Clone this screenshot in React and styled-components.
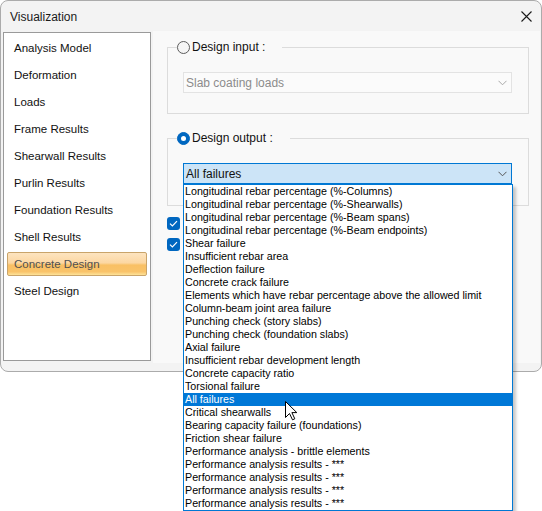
import React from "react";
import styled, { createGlobalStyle } from "styled-components";

const UI = `"Liberation Sans", Arial, sans-serif`;

const GlobalStyle = createGlobalStyle`
  html, body {
    margin: 0;
    padding: 0;
    background: #fff;
  }
  body {
    font-family: ${UI};
    width: 542px;
    height: 511px;
    overflow: hidden;
  }
`;

const navItems = [
  "Analysis Model",
  "Deformation",
  "Loads",
  "Frame Results",
  "Shearwall Results",
  "Purlin Results",
  "Foundation Results",
  "Shell Results",
  "Concrete Design",
  "Steel Design",
];

const options = [
  "Longitudinal rebar percentage (%-Columns)",
  "Longitudinal rebar percentage (%-Shearwalls)",
  "Longitudinal rebar percentage (%-Beam spans)",
  "Longitudinal rebar percentage (%-Beam endpoints)",
  "Shear failure",
  "Insufficient rebar area",
  "Deflection failure",
  "Concrete crack failure",
  "Elements which have rebar percentage above the allowed limit",
  "Column-beam joint area failure",
  "Punching check (story slabs)",
  "Punching check (foundation slabs)",
  "Axial failure",
  "Insufficient rebar development length",
  "Concrete capacity ratio",
  "Torsional failure",
  "All failures",
  "Critical shearwalls",
  "Bearing capacity failure (foundations)",
  "Friction shear failure",
  "Performance analysis - brittle elements",
  "Performance analysis results - ***",
  "Performance analysis results - ***",
  "Performance analysis results - ***",
  "Performance analysis results - ***",
];

export default function App() {
  return (
    <>
      <GlobalStyle />
      <Dialog>
        <TitleBar>
          <Title>Visualization</Title>
          <CloseButton>
            <svg width="11" height="11" viewBox="0 0 11 11">
              <path d="M0.5 0.5 L10.5 10.5 M10.5 0.5 L0.5 10.5" stroke="#1a1a1a" strokeWidth="1.1" fill="none" />
            </svg>
          </CloseButton>
        </TitleBar>
        <Body>
          <NavList>
            {navItems.map((item) => (
              <NavItem key={item} $active={item === "Concrete Design"}>
                {item}
              </NavItem>
            ))}
          </NavList>
          <Panel>
            <GroupBox>
              <Legend>
                <Radio />
                Design input :
              </Legend>
              <Combo $disabled>
                Slab coating loads
                <Chevron color="#a8a8a8" />
              </Combo>
            </GroupBox>

            <GroupBox $second>
              <Legend>
                <Radio $checked />
                Design output :
              </Legend>
              <ComboWrap>
                <Combo $open>
                  All failures
                  <Chevron color="#555" />
                </Combo>
                <DropList>
                  {options.map((opt, i) => (
                    <Option key={i} $selected={opt === "All failures"}>
                      {opt}
                    </Option>
                  ))}
                </DropList>
              </ComboWrap>
            </GroupBox>

            <Checks>
              <CheckBox />
              <CheckBox />
            </Checks>
          </Panel>
        </Body>
        <Cursor width="13" height="20" viewBox="0 0 13 20">
          <path
            d="M0.5 0.5 L0.5 16.5 L4.5 12.5 L7.5 18.8 L9.8 17.8 L6.9 11.6 L11.8 11.6 Z"
            fill="#fff"
            stroke="#000"
            strokeWidth="1"
            strokeLinejoin="round"
          />
        </Cursor>
      </Dialog>
    </>
  );
}

function Chevron({ color }) {
  return (
    <ChevronIcon width="9" height="6" viewBox="0 0 9 6">
      <path d="M0.5 0.8 L4.5 4.8 L8.5 0.8" stroke={color} strokeWidth="1" fill="none" />
    </ChevronIcon>
  );
}

function CheckBox() {
  return (
    <CheckBoxBox>
      <svg width="9" height="7" viewBox="0 0 9 7">
        <path d="M1 3.6 L3.4 6 L8 1.2" stroke="#fff" strokeWidth="1.2" fill="none" />
      </svg>
    </CheckBoxBox>
  );
}

const Dialog = styled.div`
  position: relative;
  width: 540px;
  height: 370px;
  border: 1px solid #ababab;
  border-radius: 8px;
  background: #f3f3f3;
  display: flex;
  flex-direction: column;
`;

const TitleBar = styled.div`
  height: 30px;
  display: flex;
  align-items: center;
  justify-content: space-between;
  padding: 0 9px 0 9px;
  flex-shrink: 0;
`;

const Title = styled.div`
  font-size: 12px;
  color: #1a1a1a;
  padding-top: 1px;
`;

const CloseButton = styled.div`
  width: 11px;
  height: 11px;
  display: flex;
  margin-top: 1px;
`;

const Body = styled.div`
  flex: 1;
  display: flex;
  padding: 0 0 8px 1px;
  min-height: 0;
`;

const NavList = styled.div`
  width: 146px;
  margin: 1px 0 2px 1px;
  border: 1px solid #9a9a9a;
  background: #fff;
  padding-top: 3px;
  display: flex;
  flex-direction: column;
  gap: 3px;
`;

const NavItem = styled.div`
  height: 24px;
  margin: 0 3px;
  padding-left: 6px;
  display: flex;
  align-items: center;
  font-size: 11.5px;
  color: ${(p) => (p.$active ? "#505050" : "#111")};
  border: 1px solid ${(p) => (p.$active ? "#c9a46a" : "transparent")};
  border-radius: 2px;
  box-sizing: border-box;
  background: ${(p) =>
    p.$active
      ? "linear-gradient(to bottom, #fde4c0 0%, #fcd7a2 45%, #f9c064 55%, #f9c36a 85%, #fde39a 100%)"
      : "transparent"};
`;

const Panel = styled.div`
  flex: 1;
  margin: 0 1px 0 2px;
  background: #f9f9f9;
  padding: 8px 11px 0 14px;
  display: flex;
  flex-direction: column;
`;

const GroupBox = styled.fieldset`
  margin: ${(p) => (p.$second ? "16px" : "0")} 0 0 0;
  padding: 0 16px ${(p) => (p.$second ? "21px" : "20px")} 15px;
  border: 1px solid #dcdcdc;
  min-width: 0;
`;

const Legend = styled.legend`
  margin-left: -6px;
  padding: 0 17px 0 0;
  height: 16px;
  display: flex;
  align-items: center;
  gap: 2px;
  font-size: 12px;
  color: #111;
`;

const Radio = styled.span`
  width: 13px;
  height: 13px;
  box-sizing: border-box;
  border-radius: 50%;
  display: flex;
  align-items: center;
  justify-content: center;
  border: 1px solid ${(p) => (p.$checked ? "#0067c0" : "#5c5c5c")};
  background: ${(p) => (p.$checked ? "#0067c0" : "#f5f5f5")};
  &::after {
    content: "";
    width: 5px;
    height: 5px;
    border-radius: 50%;
    background: #fff;
    display: ${(p) => (p.$checked ? "block" : "none")};
  }
`;

const ComboWrap = styled.div`
  position: relative;
  margin-top: 17px;
`;

const Combo = styled.div`
  margin-top: ${(p) => (p.$open ? "0" : "17px")};
  height: 21px;
  box-sizing: border-box;
  display: flex;
  align-items: center;
  justify-content: space-between;
  padding: 0 4px 0 2px;
  font-size: 12px;
  border: 1px solid ${(p) => (p.$open ? "#0078d4" : "#e3e3e3")};
  background: ${(p) => (p.$open ? "#cce4f7" : "#fbfbfb")};
  color: ${(p) => (p.$disabled ? "#8c8c8c" : "#111")};
`;

const ChevronIcon = styled.svg`
  flex-shrink: 0;
`;

const DropList = styled.div`
  position: absolute;
  top: 100%;
  left: 0;
  width: 330px;
  box-sizing: border-box;
  border: 1px solid #0078d4;
  background: #fff;
  box-shadow: 3px 3px 3px rgba(0, 0, 0, 0.22);
  z-index: 5;
`;

const Option = styled.div`
  height: 13px;
  line-height: 13px;
  padding-left: 1px;
  font-size: 10.7px;
  white-space: nowrap;
  color: ${(p) => (p.$selected ? "#fff" : "#000")};
  background: ${(p) => (p.$selected ? "#0078d7" : "transparent")};
`;

const Checks = styled.div`
  margin-top: 11px;
  display: flex;
  flex-direction: column;
  gap: 8px;
`;

const CheckBoxBox = styled.div`
  width: 13px;
  height: 13px;
  border-radius: 3px;
  background: #0067c0;
  display: flex;
  align-items: center;
  justify-content: center;
`;

const Cursor = styled.svg`
  position: absolute;
  left: 284px;
  top: 400px;
  z-index: 10;
`;
